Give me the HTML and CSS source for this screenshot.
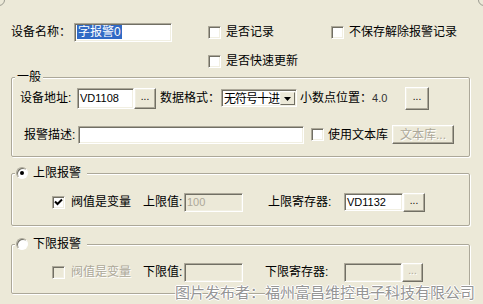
FILE: index.html
```html
<!DOCTYPE html>
<html>
<head>
<meta charset="utf-8">
<link rel="stylesheet" href="styles.css">
</head>
<body>
<div class="top">
  <div class="row r1">
    <span class="lbl w-name">设备名称：</span>
    <span class="edit name"><span class="sel">字报警0</span></span>
    <span class="chk c-rec"><span class="box"></span><span>是否记录</span></span>
    <span class="chk"><span class="box"></span><span>不保存解除报警记录</span></span>
  </div>
  <div class="row r2">
    <span class="chk"><span class="box"></span><span>是否快速更新</span></span>
  </div>
</div>

<div class="group g1">
  <span class="legend lg1">一般</span>
  <div class="row ra">
    <span class="lbl w-addr">设备地址:</span>
    <span class="edit addr lat">VD1108</span>
    <span class="btn dots">...</span>
    <span class="lbl w-fmt">数据格式：</span>
    <span class="combo"><span class="combo-text">无符号十进</span><span class="combo-btn"><svg width="7" height="4" viewBox="0 0 7 4"><path d="M0 0h7L3.5 4z" fill="#000"/></svg></span></span>
    <span class="lbl w-dec">小数点位置：<span class="lat val">4.0</span></span>
    <span class="btn dots big">...</span>
  </div>
  <div class="row rb">
    <span class="lbl w-desc">报警描述:</span>
    <span class="edit desc"></span>
    <span class="chk c-lib"><span class="box"></span><span>使用文本库</span></span>
    <span class="btn lib disabled">文本库...</span>
  </div>
</div>

<div class="group g2">
  <span class="legend lgr"><span class="radio on"></span><span>上限报警</span></span>
  <div class="row rc">
    <span class="chk c-var"><span class="box"><svg width="9" height="9" viewBox="0 0 9 9"><path d="M1 3.5l2.5 2.5L8 1.5" fill="none" stroke="#000" stroke-width="2"/></svg></span><span>阀值是变量</span></span>
    <span class="lbl w-lim">上限值:</span>
    <span class="edit lim off lat">100</span>
    <span class="lbl w-reg">上限寄存器:</span>
    <span class="edit reg lat">VD1132</span>
    <span class="btn dots sm">...</span>
  </div>
</div>

<div class="group g3">
  <span class="legend lgr"><span class="radio"></span><span>下限报警</span></span>
  <div class="row rc">
    <span class="chk c-var dis"><span class="box"></span><span>阀值是变量</span></span>
    <span class="lbl w-lim">下限值:</span>
    <span class="edit lim off"></span>
    <span class="lbl w-reg2">下限寄存器:</span>
    <span class="edit reg2 off"></span>
    <span class="btn dots sm2 disabled">...</span>
  </div>
</div>

<div class="watermark">图片发布者：福州富昌维控电子科技有限公司</div>
<span class="corner cl"></span>
<span class="corner cr"></span>
</body>
</html>
```

FILE: styles.css
```css
html, body {
  margin: 0;
  padding: 0;
}
body {
  width: 483px;
  height: 304px;
  overflow: hidden;
  position: relative;
  background: #ECE9D8;
  color: #000;
  font-family: "Liberation Sans", "Noto Sans CJK SC", sans-serif;
  font-size: 12px;
  line-height: 14px;
}
.lat {
  font-family: "Liberation Sans", sans-serif;
  font-size: 11px;
}
.row {
  display: flex;
  align-items: center;
}
.lbl {
  white-space: nowrap;
  flex: none;
}

/* top section */
.top {
  padding: 22px 0 0 11px;
}
.r1 { height: 20px; }
.r2 { height: 14px; margin-top: 12px; padding-left: 197px; }
.w-name { width: 63px; }

/* sunken edit */
.edit {
  box-sizing: border-box;
  flex: none;
  display: flex;
  align-items: center;
  height: 19px;
  padding-left: 2px;
  background: #fff;
  border: 1px solid;
  border-color: #ACA899 #fff #fff #ACA899;
  box-shadow: inset 1px 1px 0 #716F64, inset -1px -1px 0 #F1EFE2;
  white-space: nowrap;
  overflow: hidden;
}
.edit.off {
  background: #ECE9D8;
  color: #ACA899;
}
.name { width: 98px; }
.sel {
  background: #316AC5;
  color: #fff;
  padding: 0 1px;
  line-height: 14px;
}
.addr { width: 57px; height: 21px; }
.desc { width: 226px; height: 18px; }
.lim { width: 59px; }
.reg { width: 59px; height: 18px; }
.reg2 { width: 58px; height: 19px; }

/* buttons */
.btn {
  box-sizing: border-box;
  flex: none;
  display: flex;
  align-items: center;
  justify-content: center;
  background: #ECE9D8;
  border: 1px solid;
  border-color: #fff #716F64 #716F64 #fff;
  box-shadow: inset -1px -1px 0 #ACA899, inset 1px 1px 0 #F1EFE2;
  white-space: nowrap;
}
.btn.dots {
  font-family: "Liberation Sans", sans-serif;
  font-size: 10px;
  letter-spacing: 0;
  padding-bottom: 3px;
}
.btn.disabled {
  color: #ACA899;
  text-shadow: 1px 1px 0 #fff;
}
.ra .dots { width: 22px; height: 21px; }
.dots.big { width: 24px; height: 23px; }
.dots.sm { width: 22px; height: 19px; }
.dots.sm2 { width: 21px; height: 19px; }
.lib { width: 62px; height: 19px; margin-left: 2px; }

/* checkboxes */
.chk {
  display: flex;
  align-items: center;
  white-space: nowrap;
  flex: none;
}
.chk .box {
  box-sizing: border-box;
  width: 13px;
  height: 13px;
  margin-right: 5px;
  background: #fff;
  border: 1px solid;
  border-color: #ACA899 #fff #fff #ACA899;
  box-shadow: inset 1px 1px 0 #716F64, inset -1px -1px 0 #F1EFE2;
  display: flex;
  align-items: center;
  justify-content: center;
  flex: none;
}
.chk.dis .box { background: #ECE9D8; }
.chk.dis { color: #ACA899; text-shadow: 1px 1px 0 #fff; }
.c-rec { margin-left: 36px; width: 123px; }
.c-lib { margin-left: 7px; width: 79px; }
.c-lib .box { margin-right: 4px; }
.c-var { margin-left: 40px; width: 91px; }
.c-var .box { margin-right: 6px; }

/* group boxes */
.group {
  position: relative;
  margin: 0 13px 0 11px;
  border: 1px solid #ACA899;
  border-radius: 2px;
  box-shadow: inset 1px 1px 0 #fff, 1px 1px 0 #fff;
}
.legend {
  position: absolute;
  top: -8px;
  background: #ECE9D8;
  line-height: 14px;
  white-space: nowrap;
  display: flex;
  align-items: center;
}
.lg1 { left: 3px; padding: 0 2px; }
.lgr { left: 3px; padding: 0 6px 0 1px; }
.radio {
  box-sizing: border-box;
  width: 12px;
  height: 12px;
  margin-right: 5px;
  border-radius: 50%;
  background: #fff;
  border: 1px solid;
  border-color: #ACA899 #fff #fff #ACA899;
  box-shadow: inset 1px 1px 0 #716F64;
  display: flex;
  align-items: center;
  justify-content: center;
}
.radio.on::after {
  content: "";
  width: 4px;
  height: 4px;
  border-radius: 50%;
  background: #000;
}

.g1 { margin-top: 9px; padding: 8px 0 11px 8px; }
.ra { height: 24px; }
.rb { height: 21px; margin-top: 14px; margin-left: 4px; }
.w-addr { width: 57px; }
.w-fmt { width: 61px; margin-left: 4px; }
.w-dec { width: 105px; margin-left: 3px; }
.val { color: #333; }
.w-desc { width: 54px; }

/* combo */
.combo {
  box-sizing: border-box;
  flex: none;
  width: 76px;
  height: 18px;
  display: flex;
  align-items: stretch;
  background: #fff;
  border: 1px solid;
  border-color: #ACA899 #fff #fff #ACA899;
  box-shadow: inset 1px 1px 0 #716F64, inset -1px -1px 0 #F1EFE2;
  padding: 2px 1px 1px 2px;
  overflow: hidden;
}
.combo-text {
  flex: 1;
  overflow: hidden;
  white-space: nowrap;
  line-height: 14px;
  letter-spacing: -1px;
}
.combo-btn {
  box-sizing: border-box;
  width: 15px;
  flex: none;
  background: #ECE9D8;
  border: 1px solid;
  border-color: #F1EFE2 #716F64 #716F64 #F1EFE2;
  display: flex;
  align-items: center;
  justify-content: center;
}

.g2 { margin-top: 16px; padding: 18px 0 13px 0; }
.g3 { margin-top: 18px; padding: 17px 0 11px 0; }
.rc { height: 20px; }
.w-lim { width: 41px; }
.w-reg { width: 76px; margin-left: 25px; }
.w-reg2 { width: 79px; margin-left: 22px; }

/* watermark overlay */
.watermark {
  position: absolute;
  left: 175px;
  top: 284px;
  font-size: 15px;
  line-height: 17px;
  white-space: nowrap;
  color: #959595;
  text-shadow: 1px 0 0 #fff, -1px 0 0 #fff, 0 1px 0 #fff, 0 -1px 0 #fff;
}

.corner {
  position: absolute;
  top: -6px;
  width: 10px;
  height: 10px;
  border: 1px solid #9a9a90;
  border-radius: 50%;
}
.cl { left: -7px; }
.cr { left: 478px; }
```
